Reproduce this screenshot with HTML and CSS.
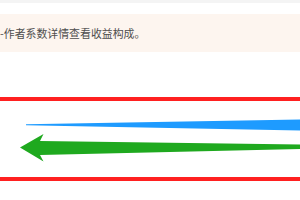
FILE: index.html
```html
<!DOCTYPE html>
<html lang="zh-CN">

<head>
    <meta charset="UTF-8">
    <meta name="viewport" content="width=device-width, initial-scale=1.0">
    <title>收益说明</title>
    <link rel="stylesheet" href="styles.css">
</head>

<body>
    <div class="top-strip"></div>

    <div class="notice">
        <p class="notice-text">-作者系数详情查看收益构成。</p>
    </div>

    <div class="marked-area">
        <svg class="arrows" viewBox="0 0 300 76" preserveAspectRatio="none">
            <!-- blue wedge -->
            <polygon points="26,23.2 300,18.5 300,29.5 26,24.2" fill="#1e9bff" />
            <!-- green arrow pointing left -->
            <polygon points="20,46.4 43.5,33 40,40 300,43.5 300,48 40,54 43.5,60.6" fill="#1fa91f" />
        </svg>
    </div>
</body>

</html>
```

FILE: styles.css
```css
body {
    margin: 0;
    font-family: "Noto Sans CJK SC", "Noto Sans", sans-serif;
    background: #ffffff;
    width: 300px;
    overflow: hidden;
}

.top-strip {
    height: 3px;
    background: #f4f4f4;
}

.notice {
    margin-top: 11px;
    height: 38px;
    background: #fdf5ef;
    display: flex;
    align-items: center;
}

.notice-text {
    margin: 0;
    font-size: 10.9px;
    color: #4d4d4d;
    white-space: nowrap;
}

.marked-area {
    margin-top: 45px;
    height: 76px;
    border-top: 4px solid #ff2020;
    border-bottom: 4px solid #ff2020;
}

.arrows {
    display: block;
    width: 300px;
    height: 76px;
}
```
